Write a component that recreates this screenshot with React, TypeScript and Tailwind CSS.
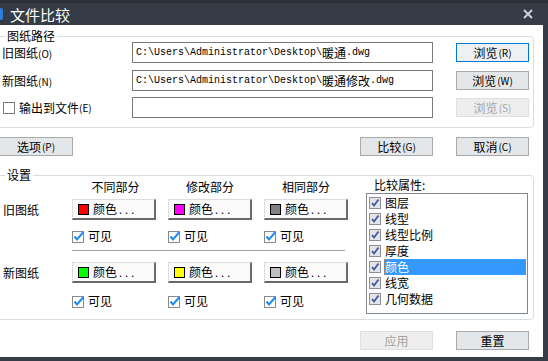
import React from "react";

type Variant = "normal" | "focus" | "disabled";

const Btn = ({
  label,
  mn,
  variant = "normal",
  className = "",
}: {
  label: string;
  mn?: string;
  variant?: Variant;
  className?: string;
}) => {
  const look =
    variant === "focus"
      ? "border-[#0078d7] bg-[#eef0f2] text-black"
      : variant === "disabled"
      ? "border-[#e0e0e0] bg-[#eeeeee] text-[#a3a3a3]"
      : "border-[#a9a9a9] bg-[#e4e7ea] text-black";
  return (
    <div
      className={`flex h-[19px] w-[73px] shrink-0 items-center justify-center border text-[12px] leading-none ${look} ${className}`}
    >
      <span>{label}</span>
      {mn && <span className="ml-[1px] text-[10px]">({mn})</span>}
    </div>
  );
};

const PathBox = ({ pre, cjk, ext }: { pre?: string; cjk?: string; ext?: string }) => (
  <div className="flex h-[21px] w-[301px] shrink-0 items-center border border-[#7a7a7a] bg-white pl-[3px] whitespace-nowrap">
    <span className="font-['Liberation_Mono',monospace] text-[10px]">{pre}</span>
    <span className="text-[12px]">{cjk}</span>
    <span className="font-['Liberation_Mono',monospace] text-[10px]">{ext}</span>
  </div>
);

const BlueCheck = () => (
  <svg width="13" height="13" viewBox="0 0 13 13" className="shrink-0">
    <rect x="0.5" y="1.5" width="11" height="11" fill="#fff" stroke="#8a8a8a" />
    <path d="M2.5 6.5 L5 9.5 L11.5 2" fill="none" stroke="#1e8cf0" strokeWidth="2" />
  </svg>
);

const ListCheck = () => (
  <svg width="12" height="12" viewBox="0 0 12 12" className="shrink-0">
    <rect x="0.5" y="0.5" width="11" height="11" fill="#e2e3e6" stroke="#8e9094" />
    <path d="M3 6 L5 8.5 L9.5 2.5" fill="none" stroke="#3f5b9e" strokeWidth="1.8" />
  </svg>
);

const ColorBtn = ({ swatch }: { swatch: string }) => (
  <div className="flex h-[21px] w-[84px] shrink-0 items-center border-t border-l border-[#dcdcdc] border-r-2 border-b-2 border-r-[#6b6b6b] border-b-[#6b6b6b] bg-[#fbfbfb] pl-[5px]">
    <span className={`h-[11px] w-[11px] border border-black ${swatch}`} />
    <span className="ml-[4px] text-[12px] leading-none">颜色</span>
    <span className="ml-[2px] text-[11px] leading-none tracking-[3px]">...</span>
  </div>
);

const Visible = () => (
  <div className="flex w-[84px] items-center">
    <BlueCheck />
    <span className="ml-[3px] text-[12px] leading-none">可见</span>
  </div>
);

const attrs = ["图层", "线型", "线型比例", "厚度", "颜色", "线宽", "几何数据"];

export default function App() {
  return (
    <div className="flex h-[361px] w-[548px] flex-col overflow-hidden bg-[#363c45] font-['Noto_Sans_CJK_SC','Liberation_Sans',sans-serif] text-black">
      {/* title bar */}
      <div className="flex h-[25px] shrink-0 items-center border-t-[3px] border-[#2b3037]">
        <div className="h-[12px] w-[3px] rounded-r-[2px] bg-[#2f7bd8]" />
        <span className="ml-[7px] text-[15px] leading-none text-white">文件比较</span>
        <svg width="10" height="10" viewBox="0 0 10 10" className="ml-auto mr-[15px]">
          <path d="M1 1 L9 9 M9 1 L1 9" stroke="#d0d4da" strokeWidth="1.8" />
        </svg>
      </div>

      <div className="flex h-[332px] shrink-0">
        <div className="w-[543px] overflow-hidden bg-white">
          {/* 图纸路径 */}
          <fieldset className="ml-[-4px] mt-[4px] w-[538px] rounded-[4px] border border-[#d6dde4] pb-[9px]">
            <legend className="ml-[8px] px-[2px] text-[12px] leading-[14px]">图纸路径</legend>
            <div className="-mt-[1px] flex h-[21px] items-center">
              <div className="w-[135px] pl-[5px] text-[12px] leading-none">
                旧图纸<span className="text-[10px]">(O)</span>
              </div>
              <PathBox pre="C:\Users\Administrator\Desktop\" cjk="暖通" ext=".dwg" />
              <Btn label="浏览" mn="R" variant="focus" className="ml-[23px]" />
            </div>
            <div className="mt-[7px] flex h-[21px] items-center">
              <div className="w-[135px] pl-[5px] text-[12px] leading-none">
                新图纸<span className="text-[10px]">(N)</span>
              </div>
              <PathBox pre="C:\Users\Administrator\Desktop\" cjk="暖通修改" ext=".dwg" />
              <Btn label="浏览" mn="W" className="ml-[23px]" />
            </div>
            <div className="mt-[6px] flex h-[21px] items-center">
              <div className="flex w-[135px] items-center pl-[6px] text-[12px] leading-none">
                <span className="h-[12px] w-[12px] border border-[#7a7a7a] bg-white" />
                <span className="ml-[4px]">输出到文件</span>
                <span className="text-[10px]">(E)</span>
              </div>
              <PathBox />
              <Btn label="浏览" mn="S" variant="disabled" className="ml-[23px]" />
            </div>
          </fieldset>

          {/* main buttons */}
          <div className="mt-[9px] flex items-center pr-[14px]">
            <Btn label="选项" mn="P" className="w-[69px] border-l-0" />
            <Btn label="比较" mn="G" className="ml-auto" />
            <Btn label="取消" mn="C" className="ml-[23px]" />
          </div>

          {/* 设置 */}
          <fieldset className="ml-[-4px] mt-[12px] w-[538px] rounded-[4px] border border-[#d6dde4] pb-[5px]">
            <legend className="ml-[8px] px-[2px] text-[12px] leading-[14px]">设置</legend>
            <div className="flex items-start">
              <div className="flex flex-col">
                <div className="-mt-[3px] flex h-[16px] gap-[12px] text-[12px] leading-[16px]">
                  <div className="w-[63px]" />
                  <div className="w-[84px] pl-[3px] text-center">不同部分</div>
                  <div className="w-[84px] text-center">修改部分</div>
                  <div className="w-[84px] text-center">相同部分</div>
                </div>
                <div className="mt-[4px] flex items-center gap-[12px]">
                  <div className="w-[63px] pl-[6px] text-[12px] leading-none">旧图纸</div>
                  <ColorBtn swatch="bg-[#ff0000]" />
                  <ColorBtn swatch="bg-[#ff00ff]" />
                  <ColorBtn swatch="bg-[#808080]" />
                </div>
                <div className="mt-[9px] flex h-[14px] items-center gap-[12px]">
                  <div className="w-[63px]" />
                  <Visible />
                  <Visible />
                  <Visible />
                </div>
                <div className="ml-[75px] mt-[7px] h-[1px] w-[273px] bg-[#a0a0a0]" />
                <div className="mt-[11px] flex items-center gap-[12px]">
                  <div className="w-[63px] pl-[6px] text-[12px] leading-none">新图纸</div>
                  <ColorBtn swatch="bg-[#00ff00]" />
                  <ColorBtn swatch="bg-[#ffff00]" />
                  <ColorBtn swatch="bg-[#c0c0c0]" />
                </div>
                <div className="mt-[11px] flex h-[14px] items-center gap-[12px]">
                  <div className="w-[63px]" />
                  <Visible />
                  <Visible />
                  <Visible />
                </div>
              </div>

              <div className="ml-auto -mt-[5px] pr-[5px]">
                <div className="h-[16px] pl-[8px] text-[12px] leading-[16px]">比较属性:</div>
                <div className="h-[121px] w-[162px] border border-[#828790] bg-white pl-[2px] pr-[1px] pt-[1px]">
                  {attrs.map((a) => (
                    <div key={a} className="flex h-[16px] items-center">
                      <ListCheck />
                      <span
                        className={`ml-[3px] h-[16px] flex-1 pl-[1px] text-[12px] leading-[16px] ${
                          a === "颜色"
                            ? "bg-[#3399ff] text-white outline-1 outline-dotted outline-[#e07a1f] -outline-offset-1"
                            : ""
                        }`}
                      >
                        {a}
                      </span>
                    </div>
                  ))}
                </div>
              </div>
            </div>
          </fieldset>

          {/* bottom buttons */}
          <div className="mt-[11px] flex items-center justify-end pr-[14px]">
            <Btn label="应用" variant="disabled" />
            <Btn label="重置" className="ml-[23px]" />
          </div>
        </div>
      </div>
    </div>
  );
}
